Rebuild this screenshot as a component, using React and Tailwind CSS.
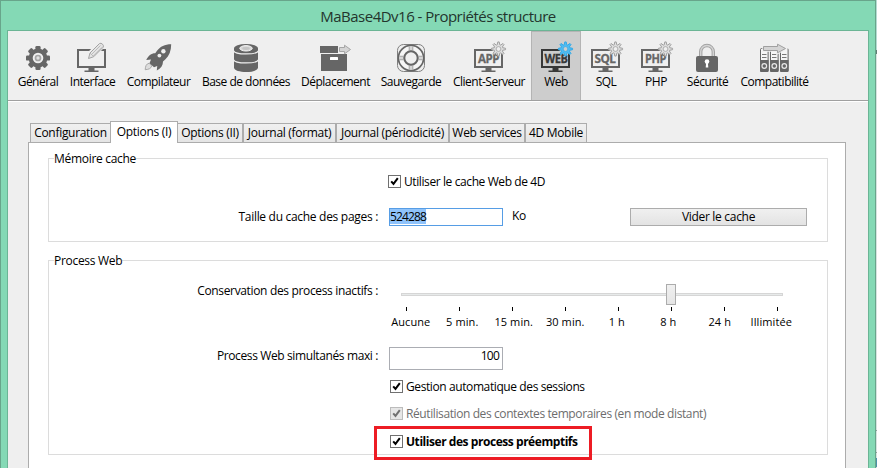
const DARK = '#666666';

// Small eight-tooth gear drawn over the corner of the monitor icons
function MiniGear({ cx, cy, stroke, fill, back = '#efefef' }) {
  const pts = [];
  for (let i = 0; i < 32; i++) {
    const r = i % 4 < 2 ? 7.1 : 4.4;
    const a = ((i - 0.5) / 32) * Math.PI * 2 - Math.PI / 2;
    pts.push(`${(cx + r * Math.cos(a)).toFixed(2)},${(cy + r * Math.sin(a)).toFixed(2)}`);
  }
  return (
    <g>
      <circle cx={cx} cy={cy} r="6" fill={back} />
      <polygon points={pts.join(' ')} fill={fill} stroke={stroke} strokeWidth="1" />
      <circle cx={cx} cy={cy} r="2.4" fill={back} stroke={stroke} strokeWidth="0.8" />
    </g>
  );
}

function Monitor({ x, color = DARK, label, textX, textW }) {
  return (
    <g>
      <rect x={x + 1} y="50" width="27" height="17" fill="none" stroke={color} strokeWidth="2" />
      <path d={`M${x + 11.5} 68h6v2.4h4v1.6h-14v-1.6h4z`} fill={color} />
      {label && (
        <text x={textX} y="63" textLength={textW} lengthAdjust="spacingAndGlyphs" fill={color} stroke={color} strokeWidth="0.3" className="font-['Open_Sans',sans-serif] text-[12.5px] font-bold">
          {label}
        </text>
      )}
    </g>
  );
}

function GearIcon() {
  return (
    <g fill={DARK}>
      {[0, 45, 90, 135].map((a) => (
        <rect key={a} x="35.4" y="46" width="5.2" height="24" rx="1.2" transform={`rotate(${a} 38 58)`} />
      ))}
      <circle cx="38" cy="58" r="9.4" />
      <circle cx="38" cy="58" r="5.3" fill="#efefef" />
      <circle cx="38" cy="58" r="2.5" fill="#e0e0e0" stroke="#a5a5a5" strokeWidth="1.7" />
    </g>
  );
}

function InterfaceIcon() {
  return (
    <g>
      <Monitor x={77} />
      <path d="M87 60l2-7.500L99.500 42h3.500l2 3.500-11 11z" fill="#efefef" stroke="#efefef" strokeWidth="2" />
      <path d="M88.500 58.500l1.500-5.500 9.500-9.500q1.500-.8 3 .7t.7 3L93.700 56.700z" fill="#e4e4e4" stroke="#a3a3a3" />
      <path d="M91.500 54.500l9-9M93.300 56l8.700-8.700M90 53l3.700 3.700" stroke="#b0b0b0" strokeWidth=".8" fill="none" />
    </g>
  );
}

function RocketIcon() {
  return (
    <g>
      <path d="M171.200 44.200c-6.500 0-11 2.300-14 6.300l-2 2.800c-4 0-7 2.500-9 6.700l4.800-.5-1.500 3.700 4.500 4 3.200-1.300-.4 4.600c4.200-2 6.200-5 6.200-9l2.200-2c4-3.700 6-8.800 6-15.300z" fill={DARK} />
      <circle cx="163.400" cy="51.200" r="2.200" fill="#efefef" />
      <circle cx="159.400" cy="55.600" r="1.900" fill="#efefef" />
      <path d="M149.200 63.200c-3 .6-3.800 3-4 6.500 3.500-.2 6-1.300 6.500-3.800z" fill="#ddd" stroke="#a8a8a8" />
    </g>
  );
}

function DatabaseIcon() {
  return (
    <g>
      <path d="M234 48.500v19c0 6 24 6 24 0v-19z" fill={DARK} />
      <ellipse cx="246" cy="48.500" rx="12" ry="4.500" fill={DARK} />
      <ellipse cx="246" cy="48.300" rx="6.200" ry="2.700" fill="#d8d8d8" stroke="#f4f4f4" strokeWidth="1" />
      <ellipse cx="246" cy="48.500" rx="3.800" ry="1.400" fill="#c4c4c4" />
      <path d="M233.500 50.700c1.500 4.300 23.500 4.300 25 0M233.500 59.700c1.500 4.300 23.500 4.300 25 0" fill="none" stroke="#efefef" strokeWidth="1.200" />
    </g>
  );
}

function MoveIcon() {
  return (
    <g>
      <path d="M320 46h18v7h-18zM321 54h26v17h-26z" fill={DARK} />
      <rect x="330" y="57" width="8" height="3" rx=".5" fill="#fff" />
      <path d="M339.500 47.500h5v-2.300l6 4.300-6 4.300v-2.300h-5z" fill="#d4d4d4" stroke="#a5a5a5" />
    </g>
  );
}

function BuoyIcon() {
  return (
    <g fill="none">
      <rect x="397.500" y="44.500" width="27" height="27" rx="6" stroke="#808080" strokeWidth="1" />
      <circle cx="411" cy="58" r="12.600" fill="#f6f6f6" stroke={DARK} strokeWidth="1.700" />
      <path d="M411 46.200v4.300M411 65.500v4.300M399.200 58h4.300M418.500 58h4.300" stroke="#a6a6a6" strokeWidth="4.600" />
      <path d="M411 46.200v4.300M411 65.500v4.300M399.200 58h4.300M418.500 58h4.300" stroke="#d6d6d6" strokeWidth="2.600" />
      <circle cx="411" cy="58" r="6.700" stroke={DARK} strokeWidth="2" fill="#efefef" />
    </g>
  );
}

function LockIcon() {
  return (
    <g>
      <path d="M700.700 56v-4.200a6.300 6.300 0 0 1 12.600 0V56" fill="none" stroke="#a3a3a3" strokeWidth="3.400" />
      <path d="M700.700 56v-4.200a6.300 6.300 0 0 1 12.600 0V56" fill="none" stroke="#d4d4d4" strokeWidth="1.400" />
      <rect x="696" y="56" width="22" height="16" rx="2" fill={DARK} />
      <circle cx="707" cy="61.600" r="2.300" fill="#fff" />
      <path d="M706.200 62h1.600l.5 5.500h-2.600z" fill="#fff" />
    </g>
  );
}

function BindersIcon() {
  return (
    <g>
      {[760, 770, 780].map((x) => (
        <g key={x}>
          <rect x={x + 0.5} y="48.500" width="7.600" height="22.800" rx="1" fill="#f6f6f6" stroke={DARK} />
          <path d={`M${x + 2} 54.500h4.500M${x + 2} 57.500h4.500`} stroke="#777" />
          <path d={`M${x} 60h8.600v11q0 1-1 1h-6.600q-1 0-1-1z`} fill={DARK} />
          <circle cx={x + 4.3} cy="66" r="2.300" fill={DARK} stroke="#e8e8e8" strokeWidth="1.200" />
        </g>
      ))}
      <path d="M763.500 46.500h14v-2.300l8 4.300-8 4.300v-2.300h-14z" fill="#d4d4d4" stroke="#efefef" strokeWidth="2.500" />
      <path d="M763.500 46.500h14v-2.300l8 4.300-8 4.300v-2.300h-14z" fill="#d4d4d4" stroke="#a0a0a0" />
    </g>
  );
}

const GRAY_GEAR = { stroke: '#a0a0a0', fill: '#dedede' };

const TOOLS = [
  { name: 'Général', x: 12, w: 52, icon: <GearIcon /> },
  { name: 'Interface', x: 64, w: 57, icon: <InterfaceIcon /> },
  { name: 'Compilateur', x: 121, w: 75, icon: <RocketIcon /> },
  { name: 'Base de données', x: 196, w: 100, icon: <DatabaseIcon /> },
  { name: 'Déplacement', x: 296, w: 79, icon: <MoveIcon /> },
  { name: 'Sauvegarde', x: 375, w: 72, icon: <BuoyIcon /> },
  { name: 'Client-Serveur', x: 447, w: 84, icon: <g><Monitor x={474} label="APP" textX={478} textW={21} /><MiniGear cx={498.5} cy={49} {...GRAY_GEAR} /></g> },
  { name: 'Web', x: 531, w: 50, active: true, icon: <g><Monitor x={541} color="#383838" label="WEB" textX={544.5} textW={23} /><MiniGear cx={565.5} cy={49} stroke="#35a9e6" fill="#4fbcf2" back="#cdcdcd" /></g> },
  { name: 'SQL', x: 581, w: 50, icon: <g><Monitor x={591} label="SQL" textX={594.5} textW={21} /><MiniGear cx={615.5} cy={49} {...GRAY_GEAR} /></g> },
  { name: 'PHP', x: 631, w: 50, icon: <g><Monitor x={641} label="PHP" textX={645} textW={21} /><MiniGear cx={665.5} cy={49} {...GRAY_GEAR} /></g> },
  { name: 'Sécurité', x: 681, w: 53, icon: <LockIcon /> },
  { name: 'Compatibilité', x: 734, w: 81, icon: <BindersIcon /> },
];

const TABS = [
  { name: 'Configuration', size: 'w-[80px]' },
  { name: 'Options (I)', size: 'w-[68px]', active: true },
  { name: 'Options (II)', size: 'w-[65px]' },
  { name: 'Journal (format)', size: 'w-[93px]' },
  { name: 'Journal (périodicité)', size: 'w-[113px]' },
  { name: 'Web services', size: 'w-[76px]' },
  { name: '4D Mobile', size: 'w-[62px]' },
];

const STEPS = ['Aucune', '5 min.', '15 min.', '30 min.', '1 h', '8 h', '24 h', 'Illimitée'];

function Check({ children, disabled, bold }) {
  return (
    <label className="flex h-[13px] items-center gap-[3px]">
      <span className={`flex size-[13px] shrink-0 items-center justify-center border ${disabled ? 'border-[#bcbcbc] bg-[#e6e6e6]' : 'border-[#707070] bg-white'}`}>
        <svg viewBox="0 0 11 11" className="size-[11px]">
          <path d="M2.200 5.300l2.300 2.600L8.800 2.200" fill="none" stroke={disabled ? '#707070' : '#000'} strokeWidth="2" />
        </svg>
      </span>
      <span className={`${disabled ? 'text-[#6d6d6d]' : ''} ${bold ? 'font-bold tracking-[-0.45px]' : 'tracking-[-0.4px]'}`}>{children}</span>
    </label>
  );
}

function Group({ title, className, children }) {
  return (
    <section className={`mr-[17px] ml-[19px] border border-[#dcdcdc] ${className}`}>
      <h2 className="-mt-[8px] ml-[5px] h-[14px] w-fit bg-white leading-[16px]">{title}</h2>
      {children}
    </section>
  );
}

export default function App() {
  return (
    <div className="flex h-[468px] w-[877px] overflow-hidden bg-[#d6e3e0] font-['Open_Sans','Noto_Sans',sans-serif] text-[12px] leading-[16px] tracking-[-0.3px] whitespace-nowrap text-black">
      <div className="flex w-[876px] shrink-0 flex-col border-x border-t border-[#68a58b] bg-[#84d9b5]">
        <header className="flex h-[29px] shrink-0 items-center justify-center text-[15px] tracking-[-0.51px] text-[#23352d]">
          <h1>MaBase4Dv16 - Propriétés structure</h1>
        </header>
        <main className="ml-[6px] flex w-[862px] grow flex-col border-x border-t border-[#6bb595] bg-[#efefef]">
          <nav className="flex h-[70px] shrink-0 border-b border-[#a0a0a0] pl-[4px] tracking-[-0.5px]">
            {TOOLS.map((t) => (
              <button key={t.name} style={{ width: t.w }} className={`flex shrink-0 flex-col items-center ${t.active ? 'bg-[#cdcdcd] shadow-[inset_1px_1px_0_#b4b4b4,inset_-1px_0_0_#b4b4b4]' : ''}`}>
                <svg viewBox={`${t.x} 31 ${t.w} 43`} className="h-[43px] w-full shrink-0">{t.icon}</svg>
                <span>{t.name}</span>
              </button>
            ))}
          </nav>
          <div className="flex h-[41px] shrink-0 items-end border-t border-white pl-[22px]">
            {TABS.map((t) => (
              <button
                key={t.name}
                className={`flex shrink-0 items-center justify-center border-[#acacac] ${t.size} ${
                  t.active ? 'z-10 -mb-px h-[22px] border-x border-t bg-white pb-[2px]' : 'h-[19px] border-x border-t bg-linear-to-b from-[#f0f0f0] to-[#e5e5e5]'
                } ${t.name === 'Configuration' ? 'border-r-0' : ''} ${t.name === 'Options (II)' ? 'border-l-0' : ''}`}
              >
                {t.name}
              </button>
            ))}
          </div>
          <div className="ml-[20px] flex w-[818px] grow flex-col border-x border-t border-[#acacac] bg-white pt-[15px]">
            <Group title="Mémoire cache" className="h-[84px]">
              <div className="mt-[10px] ml-[339px]">
                <Check>Utiliser le cache Web de 4D</Check>
              </div>
              <div className="mt-[20px] flex h-[18px] items-center">
                <span className="w-[329px] text-right">Taille du cache des pages :</span>
                <div className="ml-[11px] flex h-[18px] w-[114px] items-start border border-[#569de5]">
                  <span className="h-[15px] w-[36px] bg-[#8fc3fb] leading-[15px] tracking-[-0.86px]">524288</span>
                </div>
                <span className="ml-[9px] pb-[2px]">Ko</span>
                <button className="mr-[20px] ml-auto flex h-[18px] w-[177px] items-center justify-center border border-[#acacac] bg-linear-to-b from-[#f0f0f0] to-[#e3e3e3]">
                  Vider le cache
                </button>
              </div>
            </Group>
            <Group title="Process Web" className="relative mt-[18px] h-[195px]">
              <div className="mt-[17px] flex h-[21px] items-center">
                <span className="w-[329px] pb-[7px] text-right tracking-[-0.34px]">Conservation des process inactifs :</span>
                <div className="ml-[23px] flex h-[21px] w-[382px] items-center">
                  <div className="h-[3px] w-[265px] border border-r-0 border-[#d6d6d6] bg-[#e7eaea]" />
                  <div className="h-[21px] w-[10px] border border-[#acacac] bg-linear-to-b from-[#f0f0f0] to-[#e5e5e5]" />
                  <div className="h-[3px] grow border border-l-0 border-[#d6d6d6] bg-[#e7eaea]" />
                </div>
              </div>
              <div className="mt-[2px] ml-[357px] flex w-[372px] justify-between">
                {STEPS.map((s) => (
                  <i key={s} className="h-[4px] w-px bg-black" />
                ))}
              </div>
              <div className="mt-[3px] ml-[336px] flex h-[16px] text-[11px] tracking-[0.1px]">
                {STEPS.map((s) => (
                  <span key={s} className="flex w-[51.5px] shrink-0 justify-center">{s}</span>
                ))}
              </div>
              <div className="mt-[17px] flex h-[23px]">
                <span className="w-[329px] pt-px text-right tracking-[-0.38px]">Process Web simultanés maxi :</span>
                <div className="ml-[11px] h-[23px] w-[114px] border border-[#abadb3] pr-[3px] text-right tracking-[-0.8px]">100</div>
              </div>
              <div className="mt-[10px] ml-[341px] flex flex-col">
                <Check>Gestion automatique des sessions</Check>
                <div className="mt-[14px]">
                  <Check disabled>Réutilisation des contextes temporaires (en mode distant)</Check>
                </div>
                <div className="mt-[15px]">
                  <Check bold>Utiliser des process préemptifs</Check>
                </div>
              </div>
              <div className="absolute top-[165px] left-[325px] h-[34px] w-[218px] border-3 border-[#ed1c24]" />
            </Group>
          </div>
        </main>
      </div>
      <aside className="flex w-px flex-col">
        <div className="h-[50px] bg-[#b5dcd3]" />
        <div className="h-[4px] bg-[#5f7f74]" />
        <div className="h-[376px]" />
        <div className="h-px bg-[#8fa09b]" />
        <div className="h-[21px]" />
        <div className="h-px bg-[#8fa09b]" />
        <div className="h-[5px]" />
        <div className="h-[9px] bg-[#4a93a8]" />
      </aside>
    </div>
  );
}
